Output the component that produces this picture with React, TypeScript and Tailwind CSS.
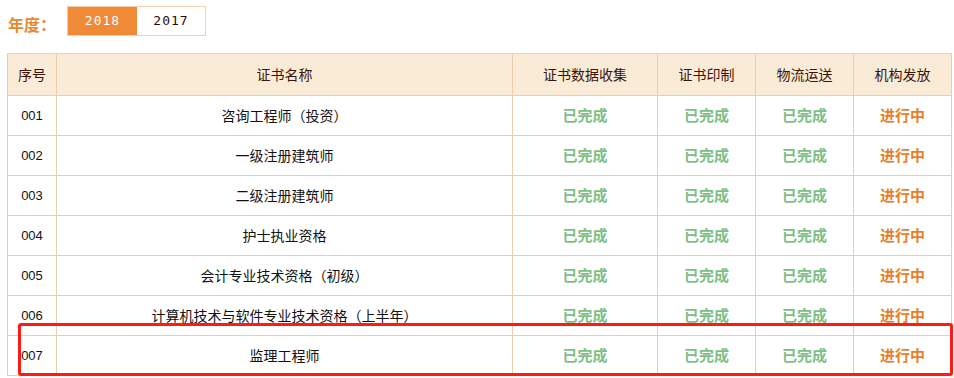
import React from 'react';

const rows = [
  { no: '001', name: '咨询工程师（投资）' },
  { no: '002', name: '一级注册建筑师' },
  { no: '003', name: '二级注册建筑师' },
  { no: '004', name: '护士执业资格' },
  { no: '005', name: '会计专业技术资格（初级）' },
  { no: '006', name: '计算机技术与软件专业技术资格（上半年）' },
  { no: '007', name: '监理工程师' },
];

const cell = 'border border-[#ebcdb0] text-center';

const App = () => {
  return (
    <div className="relative h-[378px] w-[954px] overflow-hidden bg-white font-['Noto_Sans_CJK_SC',sans-serif]">
      <div className="flex h-[53px] items-start pl-[8px] pt-[6px]">
        <span className="mt-[9px] w-[59px] text-[16px] font-bold leading-[18px] text-[#e8892f]">年度：</span>
        <div className="flex h-[30px] border border-[#f3cfae]">
          <button className="w-[69px] bg-[#f08a37] font-['DejaVu_Sans_Mono',monospace] text-[13px] tracking-[1px] text-white">2018</button>
          <button className="w-[68px] bg-white font-['DejaVu_Sans_Mono',monospace] text-[13px] tracking-[1px] text-[#2a0a05]">2017</button>
        </div>
      </div>

      <table className="ml-[7px] w-[945px] table-fixed border-collapse text-[14px]">
        <colgroup>
          <col className="w-[49px]" />
          <col className="w-[456px]" />
          <col className="w-[145px]" />
          <col className="w-[98px]" />
          <col className="w-[98px]" />
          <col className="w-[98px]" />
        </colgroup>
        <thead>
          <tr className="h-[42px] bg-[#faebd7] text-[#3a1408]">
            <th className={`${cell} font-normal`}>序号</th>
            <th className={`${cell} font-normal`}>证书名称</th>
            <th className={`${cell} font-normal`}>证书数据收集</th>
            <th className={`${cell} font-normal`}>证书印制</th>
            <th className={`${cell} font-normal`}>物流运送</th>
            <th className={`${cell} font-normal`}>机构发放</th>
          </tr>
        </thead>
        <tbody>
          {rows.map((r) => (
            <tr key={r.no} className="h-[40px] text-[#111]">
              <td className={`${cell} font-['Liberation_Sans',sans-serif] text-[13px]`}>{r.no}</td>
              <td className={cell}>{r.name}</td>
              <td className={`${cell} text-[15px] font-bold text-[#7dbf85]`}>已完成</td>
              <td className={`${cell} text-[15px] font-bold text-[#7dbf85]`}>已完成</td>
              <td className={`${cell} text-[15px] font-bold text-[#7dbf85]`}>已完成</td>
              <td className={`${cell} text-[15px] font-bold text-[#e67f2c]`}>进行中</td>
            </tr>
          ))}
        </tbody>
      </table>

      <div className="absolute left-[18px] top-[323px] h-[53px] w-[935px] rounded-[3px] border-[3px] border-[#ff1a14]" />
    </div>
  );
};

export default App;
